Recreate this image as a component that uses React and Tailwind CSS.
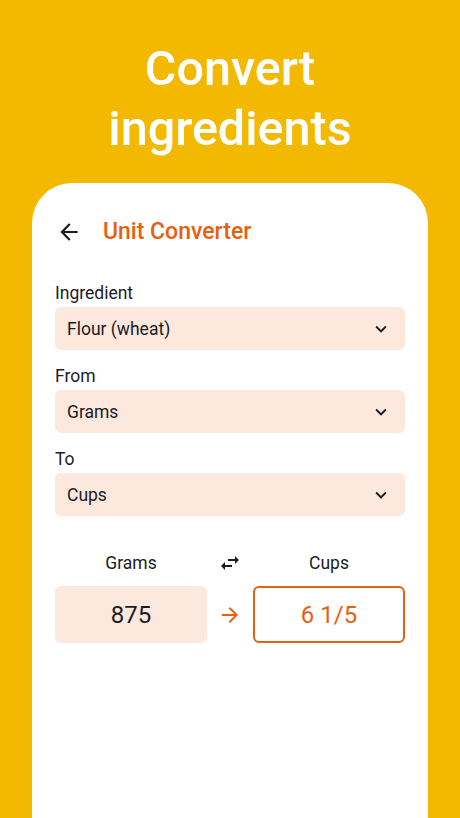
import React from "react";

const orange = "text-[#e8600f]";

function Chevron() {
    return (
        <svg width="22" height="22" viewBox="0 0 24 24" className="text-[#1c1b1f]">
            <path fill="currentColor" d="M16.59 8.59 12 13.17 7.41 8.59 6 10l6 6 6-6z" />
        </svg>
    );
}

function Select({ label, value }) {
    return (
        <div className="flex flex-col">
            <div className="h-[24px] leading-[24px] text-[17.5px] text-[#1c1b1f]">{label}</div>
            <div className="mt-[2px] h-[43px] rounded-[6px] bg-[#fde8de] flex items-center justify-between pl-[12px] pr-[13px]">
                <span className="text-[17.5px] text-[#1c1b1f] translate-y-[1px]">{value}</span>
                <Chevron />
            </div>
        </div>
    );
}

export default function App() {
    return (
        <div className="h-[818px] w-full overflow-hidden bg-[#f2b900] flex flex-col font-['Roboto',sans-serif]">
            <h1 className="pt-[39px] text-center text-white font-medium text-[48.5px] leading-[60px]">
                Convert
                <br />
                ingredients
            </h1>

            <div className="mt-[24px] mx-[32px] flex-1 bg-white rounded-t-[40px] px-[23px]">
                {/* header */}
                <div className="mt-[35px] h-[28px] flex items-center">
                    <svg width="26" height="26" viewBox="0 0 24 24" className="ml-[1px] text-[#1c1b1f]">
                        <path fill="currentColor" d="M20 11H7.83l5.59-5.59L12 4l-8 8 8 8 1.41-1.41L7.83 13H20v-2z" />
                    </svg>
                    <span className={`ml-[21px] text-[23px] font-medium ${orange}`}>Unit Converter</span>
                </div>

                <div className="mt-[35px] flex flex-col gap-[14px]">
                    <Select label="Ingredient" value="Flour (wheat)" />
                    <Select label="From" value="Grams" />
                    <Select label="To" value="Cups" />
                </div>

                {/* converter */}
                <div className="mt-[35px] grid grid-cols-[152px_46px_152px] text-[17.5px] text-[#1c1b1f]">
                    <div className="h-[24px] leading-[24px] text-center">Grams</div>
                    <div className="h-[24px] flex items-center justify-center">
                        <svg width="24" height="24" viewBox="0 0 24 24" className="text-[#1c1b1f]">
                            <path fill="currentColor" d="M6.99 11 3 15l3.99 4v-3H14v-2H6.99v-3zM21 9l-3.99-4v3H10v2h7.01v3L21 9z" />
                        </svg>
                    </div>
                    <div className="h-[24px] leading-[24px] text-center">Cups</div>

                    <div className="mt-[11px] h-[57px] rounded-[6px] bg-[#fde8de] flex items-center justify-center text-[24px]">
                        875
                    </div>
                    <div className="mt-[11px] h-[57px] flex items-center justify-center">
                        <svg width="24" height="24" viewBox="0 0 24 24" className={orange}>
                            <path fill="currentColor" d="M12 4l-1.41 1.41L16.17 11H4v2h12.17l-5.58 5.59L12 20l8-8z" />
                        </svg>
                    </div>
                    <div className={`mt-[11px] h-[57px] rounded-[6px] border-2 border-[#e8600f] flex items-center justify-center text-[24px] ${orange}`}>
                        6 1/5
                    </div>
                </div>
            </div>
        </div>
    );
}
